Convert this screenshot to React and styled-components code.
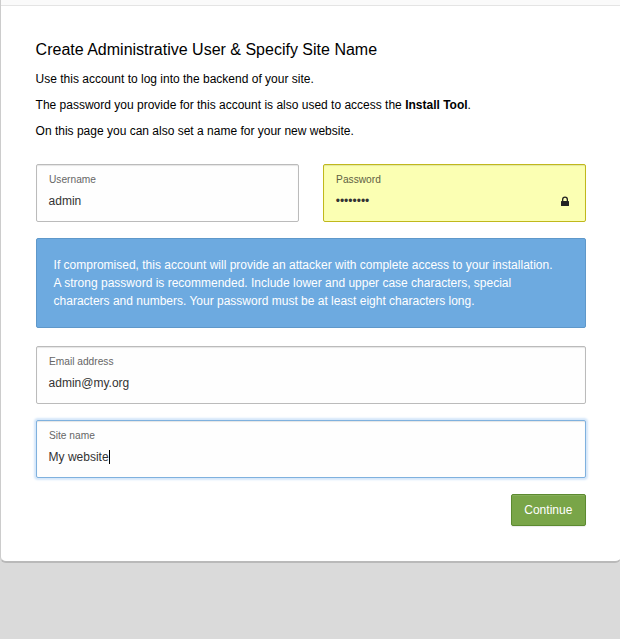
import React from 'react';
import styled, { createGlobalStyle } from 'styled-components';

const GlobalStyle = createGlobalStyle`
  * { box-sizing: border-box; }
  body {
    margin: 0;
    background: #dadada;
    font: 12px/18px "Liberation Sans", Arial, sans-serif;
    color: #000;
    overflow: hidden;
  }
`;

const Panel = styled.main`
  height: 563px;
  margin-right: -1px;
  background: #fff;
  border: solid #ccc;
  border-width: 0 0 2px 1px;
  border-bottom-color: #b9b9b9;
  border-radius: 0 0 6px 6px;
`;

const HeaderEdge = styled.div`
  height: 6px;
  background: #fafafa;
  border-bottom: 1px solid #e4e4e4;
`;

const Content = styled.form`
  padding: 33px 35.2px 0 34.6px;
`;

const Title = styled.h1`
  margin: 0 0 10px;
  font-size: 16px;
  line-height: 21px;
  font-weight: 400;
`;

const Text = styled.p`
  margin: 0 0 8px;
`;

const Fields = styled.div`
  display: flex;
  gap: 24px;
  margin-top: 24px;
`;

const Field = styled.label`
  display: flex;
  flex: 1;
  height: 58px;
  margin-bottom: 16px;
  padding: 6px 16px 0 12px;
  border: 1px solid ${(p) => (p.$focus ? '#7fb1de' : p.$secret ? '#c0b81c' : '#bbb')};
  border-radius: 2px;
  background: ${(p) => (p.$secret ? '#fbffb3' : '#fefefe')};
  box-shadow: inset 0 1px 1px rgba(0, 0, 0, 0.1)${(p) => (p.$focus ? ', 0 0 2px 2px #d5e7fa' : '')};
`;

const FieldText = styled.span`
  flex: 1;
`;

const Label = styled.span`
  display: block;
  margin-bottom: 3px;
  padding-left: 0.4px;
  font-size: 10.2px;
  color: ${(p) => (p.$secret ? '#5f6144' : '#666')};
`;

const Value = styled.span`
  display: flex;
  align-items: center;
  height: 18px;
  color: #333;
`;

const Caret = styled.i`
  width: 1px;
  height: 14px;
  background: #000;
`;

const LockIcon = styled.svg`
  width: 8px;
  height: 10px;
  margin-top: 25px;
  fill: #222;
`;

const Notice = styled.aside`
  height: 90px;
  margin-bottom: 18px;
  padding: 17px;
  border: 1px solid #5f98ca;
  border-radius: 2px;
  background: #6daae0;
  color: #fff;
  white-space: nowrap;
`;

const Actions = styled.div`
  display: flex;
  justify-content: flex-end;
`;

const Button = styled.button`
  width: 75px;
  height: 32px;
  padding: 0;
  border: 1px solid #5c8a30;
  border-radius: 2px;
  background: #79a548;
  box-shadow: inset 0 1px 0 rgba(255, 255, 255, 0.1), 0 1px 1px rgba(0, 0, 0, 0.08);
  color: #fff;
  font: inherit;
`;

export default function App() {
  return (
    <>
      <GlobalStyle />
      <Panel>
        <HeaderEdge />
        <Content>
          <Title>Create Administrative User &amp; Specify Site Name</Title>
          <Text>Use this account to log into the backend of your site.</Text>
          <Text>The password you provide for this account is also used to access the <b>Install Tool</b>.</Text>
          <Text>On this page you can also set a name for your new website.</Text>
          <Fields>
            <Field><FieldText><Label>Username</Label><Value>admin</Value></FieldText></Field>
            <Field $secret>
              <FieldText><Label $secret>Password</Label><Value>••••••••</Value></FieldText>
              <LockIcon viewBox="0 0 8 10" aria-hidden="true">
                <path fillRule="evenodd" d="M1 5V3.4a3 3 0 0 1 6 0V5h.4q.6 0 .6.6v3.8q0 .6-.6.6H.6Q0 10 0 9.4V5.6Q0 5 .6 5ZM2.3 5h3.4V3.4a1.7 1.7 0 0 0-3.4 0Z" />
              </LockIcon>
            </Field>
          </Fields>
          <Notice>
            If compromised, this account will provide an attacker with complete access to your installation.<br />
            A strong password is recommended. Include lower and upper case characters, special<br />
            characters and numbers. Your password must be at least eight characters long.
          </Notice>
          <Field><FieldText><Label>Email address</Label><Value>admin@my.org</Value></FieldText></Field>
          <Field $focus><FieldText><Label>Site name</Label><Value>My website<Caret /></Value></FieldText></Field>
          <Actions><Button type="button">Continue</Button></Actions>
        </Content>
      </Panel>
    </>
  );
}
